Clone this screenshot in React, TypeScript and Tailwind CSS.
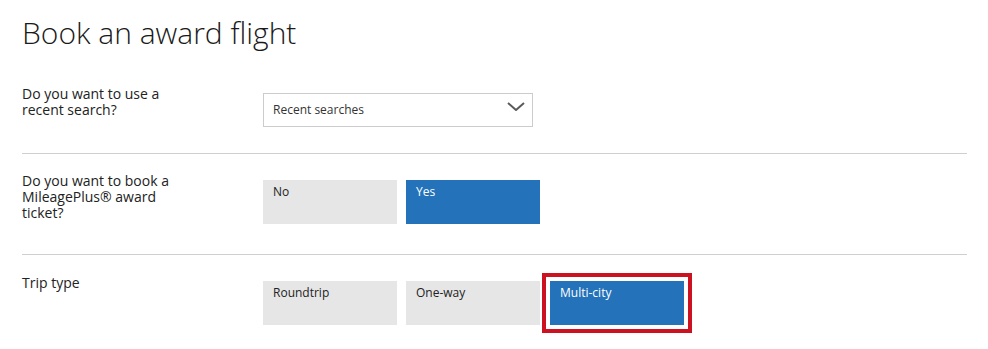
import React from "react";

const font = { fontFamily: '"Open Sans", "Liberation Sans", sans-serif' };

function Opt({ label, active, outlined }: { label: string; active?: boolean; outlined?: boolean }) {
  return (
    <div
      className={
        "w-[134px] h-[44px] pl-[10px] pt-[4px] text-[12px] leading-[16px] " +
        (active ? "bg-[#2372ba] text-white " : "bg-[#e6e6e6] text-[#222] ") +
        (outlined ? "outline-4 outline-solid outline-offset-4 outline-[#cc1120]" : "")
      }
    >
      {label}
    </div>
  );
}

export default function App() {
  return (
    <div className="w-[988px] h-[349px] overflow-hidden bg-white pl-[22px] pr-[21px]" style={font}>
      <h1 className="pt-[18px] text-[30px] leading-[30px] font-light text-[#1a1a1a]">Book an award flight</h1>

      <div className="mt-[38px] flex">
        <div className="w-[241px] pr-[76px] text-[14px] leading-[16px] text-[#222]">
          Do you want to use a recent search?
        </div>
        <div className="mt-[7px] w-[270px] h-[34px] border border-[#cccccc] flex items-center justify-between pl-[9px] pr-[7px]">
          <span className="text-[12px] leading-[16px] text-[#333]">Recent searches</span>
          <svg width="18" height="9" viewBox="0 0 18 9" className="-mt-[7px]">
            <polyline points="1,1 9,8 17,1" fill="none" stroke="#5a5a5a" strokeWidth="2" />
          </svg>
        </div>
      </div>

      <div className="mt-[26px] h-px bg-[#cfcfcf]" />

      <div className="pt-[19px] flex">
        <div className="w-[241px] pr-[76px] text-[14px] leading-[16px] text-[#222]">
          Do you want to book a MileagePlus® award ticket?
        </div>
        <div className="mt-[7px] flex gap-[9px]">
          <Opt label="No" />
          <Opt label="Yes" active />
        </div>
      </div>

      <div className="mt-[30px] h-px bg-[#cfcfcf]" />

      <div className="pt-[20px] flex">
        <div className="w-[241px] pr-[76px] text-[14px] leading-[16px] text-[#222]">Trip type</div>
        <div className="mt-[6px] flex gap-[9px]">
          <Opt label="Roundtrip" />
          <Opt label="One-way" />
          <div className="ml-px">
            <Opt label="Multi-city" active outlined />
          </div>
        </div>
      </div>
    </div>
  );
}
